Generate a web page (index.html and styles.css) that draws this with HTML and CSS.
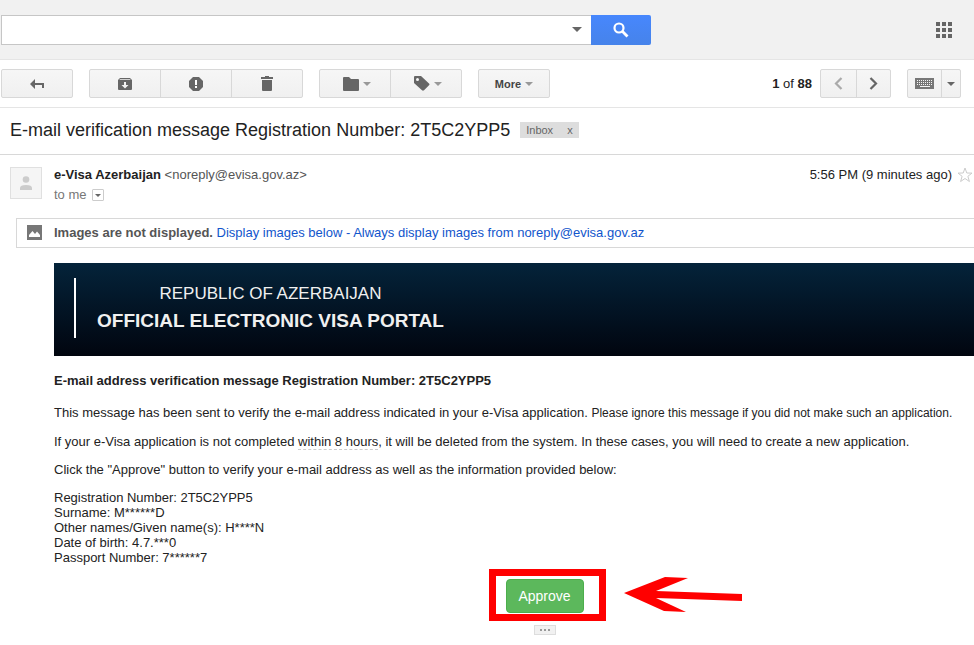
FILE: index.html
```html
<!DOCTYPE html>
<html lang="en">

<head>
    <meta charset="UTF-8">
    <meta name="viewport" content="width=device-width, initial-scale=1.0">
    <title>E-mail verification message</title>
    <link rel="stylesheet" href="styles.css">
</head>

<body>
    <header class="topbar">
        <form class="search">
            <div class="search-box">
                <input type="text" name="q" aria-label="Search mail">
                <button type="button" class="search-options" aria-label="Search options"><span class="caret caret-big"></span></button>
            </div>
            <button type="submit" class="search-btn" aria-label="Search">
                <svg width="16" height="16" viewBox="0 0 16 16"><circle cx="6" cy="6" r="4.5" fill="none" stroke="#fff" stroke-width="2.2"/><path d="M9.3 9.3l5.2 5.2" stroke="#fff" stroke-width="2.8"/></svg>
            </button>
        </form>
        <button type="button" class="apps" aria-label="Apps">
            <svg width="16" height="16" viewBox="0 0 16 16" fill="#666"><path d="M0 0h4v4H0zM6 0h4v4H6zM12 0h4v4h-4zM0 6h4v4H0zM6 6h4v4H6zM12 6h4v4h-4zM0 12h4v4H0zM6 12h4v4H6zM12 12h4v4h-4z"/></svg>
        </button>
    </header>

    <div class="toolbar">
        <div class="btn-group">
            <button type="button" aria-label="Back">
                <svg width="14" height="10" viewBox="0 0 14 10" fill="#666"><path d="M0 5l5-5v4h9v5h-2V6H5v4z"/></svg>
            </button>
        </div>
        <div class="btn-group">
            <button type="button" aria-label="Archive">
                <svg width="14" height="12" viewBox="0 0 14 12"><path fill="#666" fill-rule="evenodd" d="M2 0h10l2 2v9q0 1-1 1H1q-1 0-1-1V2zM2 1.200l-.6.8h11.200l-.6-.8zM6 4v3H3.500L7 10.500 10.500 7H8V4z"/></svg>
            </button>
            <button type="button" aria-label="Report spam">
                <svg width="14" height="14" viewBox="0 0 14 14"><path fill="#666" d="M4 0h6l4 4v6l-4 4H4l-4-4V4z"/><path fill="#fff" d="M6 3h2v5H6zM6 9h2v2H6z"/></svg>
            </button>
            <button type="button" aria-label="Delete">
                <svg width="12" height="15" viewBox="0 0 12 15" fill="#666"><path d="M0 1h4V0h4v1h4v2H0zM1 4h10v10q0 1-1 1H2q-1 0-1-1z"/></svg>
            </button>
        </div>
        <div class="btn-group">
            <button type="button" class="dropdown" aria-label="Move to">
                <svg width="16" height="14" viewBox="0 0 16 14" fill="#666"><path d="M0 1q0-1 1-1h5l2 2h7q1 0 1 1v10q0 1-1 1H1q-1 0-1-1z"/></svg>
                <span class="caret caret-light"></span>
            </button>
            <button type="button" class="dropdown" aria-label="Labels">
                <svg width="16" height="15" viewBox="0 0 16 15"><path fill="#666" d="M0 1q0-1 1-1h6l8 7.500q1 .8 0 1.800l-5 5q-1 .9-2 0L0 7z"/><circle cx="3.500" cy="3.500" r="1.500" fill="#f5f5f5"/></svg>
                <span class="caret caret-light"></span>
            </button>
        </div>
        <div class="btn-group">
            <button type="button">More <span class="caret caret-light"></span></button>
        </div>

        <span class="count"><b>1</b> of <b>88</b></span>
        <div class="btn-group pager">
            <button type="button" aria-label="Newer">
                <svg width="9" height="13" viewBox="0 0 9 13"><path d="M7.500 1L2 6.500 7.500 12" fill="none" stroke="#aaa" stroke-width="2.200"/></svg>
            </button>
            <button type="button" aria-label="Older">
                <svg width="9" height="13" viewBox="0 0 9 13"><path d="M1.500 1L7 6.500 1.500 12" fill="none" stroke="#666" stroke-width="2.200"/></svg>
            </button>
        </div>
        <div class="btn-group keyboard">
            <button type="button" aria-label="Keyboard">
                <svg width="19" height="11" viewBox="0 0 19 11"><path fill="#777" d="M0 0h19v11H0z"/><path d="M2 2.500h15M2 4.500h15M2 6.500h15" stroke="#f5f5f5" stroke-dasharray="1 1"/><path d="M5 8.500h10" stroke="#f5f5f5"/></svg>
            </button>
            <button type="button" aria-label="Select input tool"><span class="caret"></span></button>
        </div>
    </div>

    <div class="subject">
        <h1>E-mail verification message Registration Number: 2T5C2YPP5</h1>
        <span class="label">Inbox <button type="button" aria-label="Remove label">x</button></span>
    </div>

    <main>
        <div class="sender">
            <div class="avatar">
                <svg width="14" height="14" viewBox="0 0 14 14" fill="#ccc"><circle cx="7" cy="3.500" r="3.300"/><path d="M1 14v-2q0-3 6-3t6 3v2z"/></svg>
            </div>
            <div class="who">
                <div><b>e-Visa Azerbaijan</b> <span class="address">&lt;noreply@evisa.gov.az&gt;</span></div>
                <div class="to">to me <button type="button" aria-label="Show details"><span class="caret caret-small"></span></button></div>
            </div>
            <div class="time">5:56 PM (9 minutes ago)</div>
            <button type="button" class="star" aria-label="Star">
                <svg width="16" height="16" viewBox="0 0 16 16"><path d="M8 1l1.800 5 5.200.1-4.100 3.200 1.500 5.200L8 11.500l-4.400 3 1.500-5.200L1 6.100 6.200 6z" fill="#fff" stroke="#ccc"/></svg>
            </button>
        </div>

        <div class="notice">
            <svg width="15" height="15" viewBox="0 0 15 15"><path fill="#777" d="M0 0h15v15H0z"/><path fill="#fff" d="M2 12V10l3.500-4L8 9l2-2.500L13 10v2z"/></svg>
            <p><b>Images are not displayed.</b> <a href="#">Display images below</a> <a href="#">- Always display images from noreply@evisa.gov.az</a></p>
        </div>

        <article class="message">
            <div class="banner">
                <div class="banner-text">
                    <span>REPUBLIC OF AZERBAIJAN</span>
                    <strong>OFFICIAL ELECTRONIC VISA PORTAL</strong>
                </div>
            </div>

            <h2>E-mail address verification message Registration Number: 2T5C2YPP5</h2>
            <p>This message has been sent to verify the e-mail address indicated in your e-Visa application. <span class="note">Please ignore this message if you did not make such an application.</span></p>
            <p>If your e-Visa application is not completed <span class="deadline">within 8 hours</span>, it will be deleted from the system. In these cases, you will need to create a new application.</p>
            <p>Click the "Approve" button to verify your e-mail address as well as the information provided below:</p>
            <p class="details">
                Registration Number: 2T5C2YPP5<br>
                Surname: M******D<br>
                Other names/Given name(s): H****N<br>
                Date of birth: 4.7.***0<br>
                Passport Number: 7******7
            </p>

            <div class="actions">
                <div class="highlight">
                    <button type="button" class="approve">Approve</button>
                    <svg class="arrow" width="118" height="36" viewBox="0 0 118 36"><path fill="#f00" d="M0 16L41 0l23 1-32 13 86 3v7l-86-3 30 14-22-1z"/></svg>
                </div>
                <button type="button" class="trimmed" aria-label="Show trimmed content"><i></i><i></i><i></i></button>
            </div>
        </article>
    </main>
</body>

</html>
```
FILE: styles.css
```css
* {
    box-sizing: border-box;
}

body {
    margin: 0;
    background: #fff;
    color: #222;
    font-family: Arial, "Liberation Sans", sans-serif;
    font-size: 13px;
    line-height: 15px;
}

button,
input {
    margin: 0;
    padding: 0;
    border: none;
    background: none;
    font-family: inherit;
    color: inherit;
}

button {
    display: flex;
    align-items: center;
    justify-content: center;
    cursor: pointer;
}

svg {
    display: block;
    flex: none;
}

a {
    color: #15c;
    text-decoration: none;
}

/* small down arrows */
.caret {
    border: 4px solid transparent;
    border-top-color: #666;
    border-bottom: none;
}

.caret-light {
    border-top-color: #999;
}

.caret-big {
    border-width: 5px;
    border-bottom: none;
}

.caret-small {
    border-width: 3px;
    border-bottom: none;
}

/* top bar */
.topbar {
    display: flex;
    align-items: center;
    justify-content: space-between;
    height: 60px;
    padding: 0 22px 0 1px;
    background: #f1f1f1;
    border-bottom: 1px solid #e5e5e5;
}

.search {
    display: flex;
    flex: 0 1 650px;
    height: 30px;
}

.search-box {
    display: flex;
    flex: 1;
    background: #fff;
    border: 1px solid #c6c6c6;
    border-right: none;
}

.search-box input {
    flex: 1;
    min-width: 0;
    padding: 0 8px;
    font-size: 16px;
}

.search-options {
    width: 28px;
}

.search-btn {
    width: 60px;
    background: linear-gradient(#4787fd, #4683ea);
    border-radius: 0 2px 2px 0;
}

/* toolbar */
.toolbar {
    display: flex;
    align-items: center;
    height: 48px;
    padding: 0 13px 0 1px;
    border-bottom: 1px solid #e5e5e5;
}

.btn-group {
    display: flex;
    height: 29px;
    margin-right: 16px;
    background: linear-gradient(#f6f6f6, #f0f0f0);
    border: 1px solid #d8d8d8;
    border-radius: 2px;
}

.btn-group button {
    width: 70px;
    gap: 4px;
    font-size: 11px;
    font-weight: bold;
    color: #444;
}

.btn-group button + button {
    width: 71px;
    border-left: 1px solid #d8d8d8;
}

.btn-group .dropdown {
    padding-left: 4px;
}

.count {
    margin-left: auto;
    margin-right: 8px;
}

.pager button,
.pager button + button {
    width: 35px;
}

.pager button + button {
    width: 34px;
}

.keyboard {
    margin-right: 0;
}

.keyboard button {
    width: 33px;
}

.keyboard button + button {
    width: 19px;
}

/* subject line */
.subject {
    display: flex;
    align-items: center;
    gap: 10px;
    height: 47px;
    padding: 0 10px 2px;
    border-bottom: 1px solid #d8d8d8;
}

.subject h1 {
    margin: 0;
    font-size: 18px;
    font-weight: normal;
    line-height: 24px;
}

.label {
    display: flex;
    gap: 14px;
    padding: 0 6px;
    background: #ddd;
    color: #666;
    font-size: 11px;
    line-height: 16px;
}

.label button {
    font-size: 11px;
}

/* sender row */
.sender {
    display: flex;
    padding: 12px 1px 0 10px;
}

.avatar {
    display: flex;
    align-items: center;
    justify-content: center;
    width: 32px;
    height: 32px;
    margin-right: 12px;
    background: #f5f5f5;
    border: 1px solid #e0e0e0;
}

.who {
    flex: 1;
    line-height: 16px;
}

.address {
    color: #555;
}

.to {
    display: flex;
    align-items: center;
    gap: 5px;
    margin-top: 4px;
    color: #777;
}

.to button {
    width: 12px;
    height: 12px;
    border: 1px solid #ccc;
    border-radius: 1px;
}

.time {
    line-height: 16px;
}

.star {
    align-self: flex-start;
    margin-left: 5px;
}

/* images notice */
.notice {
    display: flex;
    align-items: center;
    gap: 12px;
    height: 30px;
    margin: 15px 0 15px 16px;
    padding: 0 0 1px 10px;
    border: 1px solid #d8d8d8;
    border-right: none;
    color: #555;
}

.notice p {
    margin: 0;
}

/* message body */
.message {
    padding-left: 54px;
}

.message h2 {
    margin: 17px 0;
    font-size: 13px;
}

.message p {
    margin: 13px 0;
}

.message .details {
    margin: 12px 0 4px;
}

.note {
    font-size: 12px;
}

.banner {
    padding: 15px 20px 18px;
    background: linear-gradient(#04233a, #01050f);
    color: #f0f0f0;
}

.banner-text {
    display: flex;
    flex-direction: column;
    align-items: center;
    justify-content: center;
    width: max-content;
    height: 60px;
    padding: 0 0 2px 21px;
    border-left: 2px solid #fff;
    font-size: 17px;
    line-height: 27px;
}

.banner-text strong {
    font-size: 19px;
}

.deadline {
    border-bottom: 1px dashed #ccc;
}

.actions {
    display: flex;
    flex-direction: column;
    align-items: center;
    gap: 4px;
    padding-left: 66px;
}

.highlight {
    position: relative;
    padding: 3px 15px 1px 10px;
    border: 7px solid #f00;
}

.approve {
    width: 78px;
    height: 34px;
    background: #5cb85c;
    border: 1px solid #4cae4c;
    border-radius: 4px;
    color: #fff;
    font-size: 14px;
}

/* arrow pointing at the button */
.arrow {
    position: absolute;
    top: 1px;
    left: 128px;
}

.trimmed {
    gap: 2px;
    width: 22px;
    height: 10px;
    margin-right: 5px;
    background: #f1f1f1;
    border: 1px solid #ddd;
}

.trimmed i {
    width: 2px;
    height: 2px;
    background: #999;
}
```
